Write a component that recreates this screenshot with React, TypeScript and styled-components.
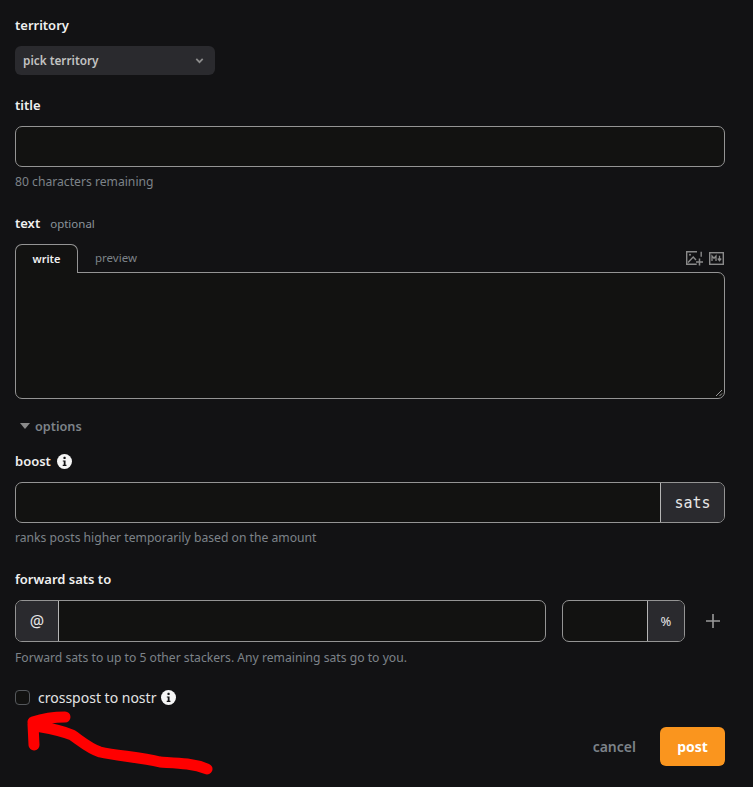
import React from "react";
import styled, { createGlobalStyle } from "styled-components";

const Global = createGlobalStyle`
  html, body { margin: 0; padding: 0; background: #121214; }
  body { font-family: "Noto Sans", "Liberation Sans", sans-serif; color: #f0f0f0; }
  * { box-sizing: border-box; }
`;

const Page = styled.form`
  position: relative;
  width: 753px;
  height: 787px;
  padding: 15px 28px 0 15px;
  overflow: hidden;
  background: #121214;
  display: flex;
  flex-direction: column;
`;

const Group = styled.div<{ $mt?: number }>`
  margin-top: ${(p) => p.$mt ?? 0}px;
  display: flex;
  flex-direction: column;
`;

const Label = styled.label`
  display: flex;
  align-items: center;
  gap: 6px;
  height: 20px;
  font-size: 13px;
  font-weight: 600;
  line-height: 20px;
  color: #f0f0f0;
`;

const Optional = styled.span`
  font-size: 11.5px;
  font-weight: 400;
  margin-left: 4px;
  padding-top: 1px;
  color: #8b949b;
`;

const SelectBox = styled.div`
  margin-top: 11px;
  width: 200px;
  height: 29px;
  border-radius: 6px;
  background: #2a2a2e;
  display: flex;
  align-items: center;
  justify-content: space-between;
  padding: 0 10px 1px 8px;
  font-size: 11.8px;
  font-weight: 600;
  color: #c2c2c2;
`;

const InputFrame = styled.div<{ $h?: number; $w?: number; $grow?: boolean; $ml?: number }>`
  height: ${(p) => p.$h ?? 41}px;
  ${(p) => (p.$w ? `width: ${p.$w}px;` : "")}
  ${(p) => (p.$grow ? "flex: 1;" : "")}
  margin-left: ${(p) => p.$ml ?? 0}px;
  border: 1px solid #949494;
  border-radius: 7px;
  background: #121211;
  display: flex;
  overflow: hidden;
`;

const Field = styled.div`
  flex: 1;
`;

const Addon = styled.div<{ $w: number; $side: "left" | "right"; $mono?: boolean; $fs?: number }>`
  width: ${(p) => p.$w}px;
  background: #2a2a2e;
  display: flex;
  align-items: center;
  justify-content: center;
  color: #e6e6e6;
  font-size: ${(p) => p.$fs ?? 14}px;
  font-family: ${(p) => (p.$mono ? '"DejaVu Sans Mono", monospace' : '"Noto Sans", sans-serif')};
  ${(p) => (p.$side === "left" ? "border-right" : "border-left")}: 1px solid #b5b5b5;
`;

const Hint = styled.div<{ $mt?: number }>`
  margin-top: ${(p) => p.$mt ?? 6}px;
  font-size: 12.16px;
  line-height: 18px;
  color: #7d8389;
`;

const TabRow = styled.div`
  margin-top: 11px;
  height: 28px;
  display: flex;
  align-items: stretch;
  position: relative;
  z-index: 1;
`;

const ActiveTab = styled.div`
  width: 63px;
  height: 29px;
  border: 1px solid #949494;
  border-bottom: none;
  border-radius: 7px 7px 0 0;
  background: #121211;
  padding-bottom: 2px;
  font-size: 11px;
  font-weight: 600;
  color: #f0f0f0;
  display: flex;
  align-items: center;
  justify-content: center;
`;

const Tab = styled.div`
  width: 76px;
  font-size: 11.5px;
  color: #7d8389;
  display: flex;
  align-items: center;
  justify-content: center;
  padding-bottom: 1px;
`;

const TabTools = styled.div`
  margin-left: auto;
  display: flex;
  align-items: center;
  gap: 6px;
  padding: 1px 1px 0 0;
`;

const EditorBox = styled.div`
  height: 127px;
  border: 1px solid #949494;
  border-radius: 0 7px 7px 7px;
  background: #121211;
  position: relative;
`;

const Grip = styled.svg`
  position: absolute;
  right: 1px;
  bottom: 1px;
`;

const Options = styled.div`
  margin-top: 17px;
  margin-left: 5px;
  height: 20px;
  display: flex;
  align-items: center;
  gap: 5px;
  font-size: 12.7px;
  font-weight: 600;
  color: #7d8389;
`;

const Row = styled.div`
  display: flex;
  align-items: center;
  margin-top: 11px;
`;

const Plus = styled.div`
  margin: 0 4px 0 20px;
  width: 16px;
  height: 16px;
  display: flex;
`;

const CheckRow = styled.div`
  margin-top: 21px;
  display: flex;
  align-items: center;
  height: 18px;
  font-size: 14px;
  color: #e4e4e4;
`;

const CheckBox = styled.span`
  width: 15px;
  height: 15px;
  border: 1px solid #55585c;
  border-radius: 4px;
  background: #121211;
  margin-right: 8px;
`;

const InfoGap = styled.span`
  width: 5px;
`;

const Actions = styled.div`
  margin-top: 21px;
  display: flex;
  justify-content: flex-end;
  align-items: center;
`;

const Cancel = styled.span`
  font-size: 14px;
  font-weight: 600;
  color: #7d8389;
  margin-right: 24px;
`;

const PostButton = styled.button`
  width: 65px;
  height: 39px;
  border: none;
  border-radius: 6px;
  background: #fa951e;
  color: #fff;
  font-family: "Noto Sans", sans-serif;
  font-size: 14px;
  font-weight: 700;
`;

const Scribble = styled.svg`
  position: absolute;
  left: 0;
  top: 0;
  pointer-events: none;
`;

const Info = ({ size = 15 }: { size?: number }) => (
  <svg width={size} height={size} viewBox="0 0 16 16">
    <circle cx="8" cy="8" r="8" fill="#f5f5f5" />
    <rect x="6.9" y="3" width="2.3" height="2.3" rx="0.6" fill="#121214" />
    <path d="M6.2 6.8h2.9v4.6h1v1.3H6.1v-1.3h1.1V8.1h-1z" fill="#121214" />
  </svg>
);

const Chevron = () => (
  <svg width="11" height="11" viewBox="0 0 12 12" fill="none">
    <path d="M2.5 4.2 6 7.8l3.5-3.6" stroke="#8c8c8c" strokeWidth="1.9" />
  </svg>
);

const ImageAdd = () => (
  <svg width="17" height="15" viewBox="0 0 17 15" fill="none" stroke="#8a8a8a" strokeWidth="1.4">
    <path d="M11 .7H.7v12.6h10" />
    <path d="M2 11.5 7.2 6l2.8 3" />
    <circle cx="4" cy="3.8" r="1" fill="#8a8a8a" stroke="none" />
    <path d="M13.5 7.5v7M10 11h7" strokeWidth="1.5" />
    <path d="M15.2.7v5" />
  </svg>
);

const Markdown = () => (
  <svg width="15" height="13" viewBox="0 0 15 13" fill="none">
    <rect x=".7" y=".7" width="13.6" height="11.6" stroke="#8a8a8a" strokeWidth="1.4" />
    <path d="M3 9V4l2 2.2L7 4v5" stroke="#8a8a8a" strokeWidth="1.3" />
    <path d="M10.5 3.8v4M8.8 6.5l1.7 2.2 1.7-2.2" stroke="#8a8a8a" strokeWidth="1.3" />
  </svg>
);

export default function App() {
  return (
    <Page>
      <Global />
      <Group>
        <Label>territory</Label>
        <SelectBox>
          pick territory
          <Chevron />
        </SelectBox>
      </Group>
      <Group $mt={20}>
        <Label>title</Label>
        <Row>
          <InputFrame $grow>
            <Field />
          </InputFrame>
        </Row>
        <Hint>80 characters remaining</Hint>
      </Group>
      <Group $mt={22}>
        <Label>
          text <Optional>optional</Optional>
        </Label>
        <TabRow>
          <ActiveTab>write</ActiveTab>
          <Tab>preview</Tab>
          <TabTools>
            <ImageAdd />
            <Markdown />
          </TabTools>
        </TabRow>
        <EditorBox>
          <Grip width="8" height="8" viewBox="0 0 8 8" stroke="#9a9a9a" strokeWidth="1">
            <path d="M1 7 7 1M4.5 7 7 4.5" />
          </Grip>
        </EditorBox>
      </Group>
      <Options>
        <svg width="10" height="6" viewBox="0 0 10 6">
          <path d="M0 0h10L5 6z" fill="#8a8a8a" />
        </svg>
        options
      </Options>
      <Group $mt={15}>
        <Label>
          boost <Info />
        </Label>
        <Row>
          <InputFrame $grow>
            <Field />
            <Addon $w={64} $side="right" $mono $fs={15}>
              sats
            </Addon>
          </InputFrame>
        </Row>
        <Hint>ranks posts higher temporarily based on the amount</Hint>
      </Group>
      <Group $mt={22}>
        <Label>forward sats to</Label>
        <Row>
          <InputFrame $h={42} $grow>
            <Addon $w={43} $side="left" $fs={16}>
              @
            </Addon>
            <Field />
          </InputFrame>
          <InputFrame $h={42} $w={123} $ml={16}>
            <Field />
            <Addon $w={37} $side="right" $fs={13}>
              %
            </Addon>
          </InputFrame>
          <Plus>
            <svg width="16" height="16" viewBox="0 0 16 16">
              <path d="M8 1v14M1 8h14" stroke="#9a9a9a" strokeWidth="1.6" />
            </svg>
          </Plus>
        </Row>
        <Hint $mt={7}>Forward sats to up to 5 other stackers. Any remaining sats go to you.</Hint>
      </Group>
      <CheckRow>
        <CheckBox />
        crosspost to nostr
        <InfoGap />
        <Info />
      </CheckRow>
      <Actions>
        <Cancel>cancel</Cancel>
        <PostButton type="button">post</PostButton>
      </Actions>
      <Scribble width="753" height="787" viewBox="0 0 753 787" fill="none">
        <path
          d="M34 745 L33 724 M33 722 C42 719 52 717 65 717 M36 726 C48 728 60 730 72 735 C82 742 90 749 100 752 C118 756 140 757 160 762 C176 763 192 763 207 769"
          stroke="#ff0000"
          strokeWidth="11"
          strokeLinecap="round"
          strokeLinejoin="round"
        />
      </Scribble>
    </Page>
  );
}
